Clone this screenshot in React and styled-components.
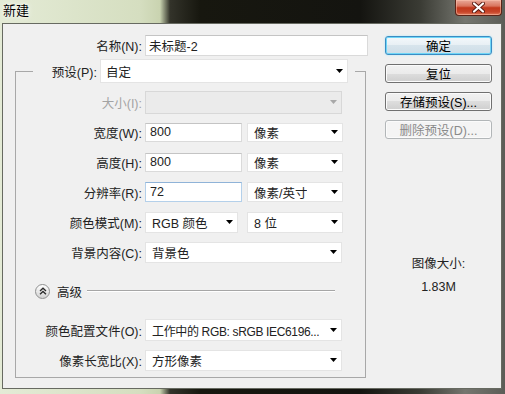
import styled, { createGlobalStyle } from "styled-components";

const GlobalStyle = createGlobalStyle`
  html, body {
    margin: 0;
    padding: 0;
    background: #1b1b16;
  }
  body {
    width: 505px;
    height: 394px;
    overflow: hidden;
  }
  * {
    box-sizing: border-box;
  }
`;

const Window = styled.div`
  width: 505px;
  height: 394px;
  display: flex;
  flex-direction: column;
  padding: 0 3px 5px 2px;
  background: linear-gradient(90deg, #e4ebd6 0px, #d5dec0 140px, #c9d3b0 160px, #33332a 170px, #17170f 200px, #141410 360px, #3a3b34 420px, #75766f 465px, #5c5d57 505px);
  font-family: "Liberation Sans", "Noto Sans CJK SC", sans-serif;
  font-size: 12.5px;
  color: #222;
`;

const TitleBar = styled.div`
  height: 23px;
  display: flex;
  justify-content: space-between;
  align-items: flex-start;
`;

const Title = styled.div`
  padding: 3px 0 0 1px;
  font-size: 13px;
  line-height: 15px;
  color: #000;
  text-shadow: 0 0 6px #fff, 0 0 3px #fff;
`;

const CloseButton = styled.div`
  width: 47px;
  height: 16px;
  border: 1px solid #5b2418;
  border-top: none;
  border-radius: 0 0 4px 4px;
  background: linear-gradient(#e9a99a, #d9755f 40%, #c2381c 52%, #c8452a 80%, #e07a5b);
  box-shadow: inset 0 0 0 1px rgba(255, 200, 180, 0.5);
  display: flex;
  align-items: center;
  justify-content: center;
`;

const Client = styled.div`
  flex: 1;
  display: flex;
  justify-content: space-between;
  border: 1px solid #676a61;
  background: #f0f0f0;
`;

const Main = styled.div`
  width: 367px;
  display: flex;
  flex-direction: column;
  padding-top: 11px;
`;

const NameRow = styled.div`
  display: flex;
  align-items: center;
  height: 21px;
`;

const Label = styled.span`
  width: ${(p) => p.$w || 126}px;
  margin-right: 3px;
  text-align: right;
  white-space: nowrap;
  color: ${(p) => (p.$disabled ? "#a3a3a3" : "#222")};
`;

const Group = styled.fieldset`
  margin: 3px 0 0 12px;
  width: 351px;
  min-width: 0;
  border: 1px solid #a8a8a8;
  padding: 4px 0 2px 0;
`;

const Legend = styled.legend`
  margin-left: 17px;
  padding: 0 7px 0 0;
`;

const LegendInner = styled.div`
  display: flex;
  align-items: center;
`;

const Row = styled.div`
  display: flex;
  align-items: center;
  height: 30px;
  margin-top: ${(p) => p.$mt || 0}px;
`;

const TextBox = styled.div`
  width: ${(p) => p.$w}px;
  height: ${(p) => p.$h || 19}px;
  display: flex;
  align-items: center;
  padding-left: ${(p) => p.$pl || 4}px;
  background: #fff;
  border: 1px solid ${(p) => (p.$focus ? "#b4d0ea" : "#dadada")};
  border-top-color: ${(p) => (p.$focus ? "#8fb3d8" : "#c4c4c4")};
  white-space: nowrap;
`;

const Select = styled.div`
  width: ${(p) => p.$w}px;
  height: ${(p) => p.$h || 21}px;
  margin-left: ${(p) => p.$ml || 0}px;
  display: flex;
  align-items: center;
  justify-content: space-between;
  gap: 4px;
  padding: 0 4px 0 ${(p) => p.$pl || 6}px;
  background: ${(p) => (p.$disabled ? "#ebebeb" : "#fff")};
  border: 1px solid ${(p) => (p.$disabled ? "#d8d8d8" : "#e4e4e4")};
  white-space: nowrap;
  overflow: hidden;
`;

const SelectText = styled.span`
  font-size: ${(p) => p.$fs || 12.5}px;
  letter-spacing: ${(p) => p.$ls || 0}px;
  overflow: hidden;
`;

const Arrow = ({ color = "#000" }) => (
  <svg width="7" height="4" viewBox="0 0 7 4" style={{ flexShrink: 0 }}>
    <polygon points="0,0 7,0 3.5,4" fill={color} />
  </svg>
);

const AdvancedRow = styled.div`
  display: flex;
  align-items: center;
  height: 30px;
  margin-top: 9px;
  padding-left: 19px;
`;

const Toggle = styled.div`
  width: 15px;
  height: 15px;
  border-radius: 50%;
  border: 1px solid #8f9090;
  background: linear-gradient(#ffffff, #e6e6e6 55%, #d2d2d2);
  display: flex;
  align-items: center;
  justify-content: center;
`;

const AdvancedText = styled.span`
  margin-left: 7px;
`;

const Rule = styled.div`
  margin-left: 5px;
  width: 248px;
  height: 2px;
  border-top: 1px solid #a6a6a6;
  border-bottom: 1px solid #fff;
`;

const Side = styled.div`
  width: 107px;
  margin-right: 9px;
  padding-top: 12px;
  display: flex;
  flex-direction: column;
  gap: 9px;
`;

const Button = styled.div`
  height: 19px;
  display: flex;
  align-items: center;
  justify-content: center;
  border-radius: 3px;
  white-space: nowrap;
  border: 1px solid ${(p) => (p.$default ? "#3a8cc4" : p.$disabled ? "#b2b6b8" : "#707070")};
  color: ${(p) => (p.$disabled ? "#8a8a8a" : "#000")};
  background: ${(p) =>
    p.$disabled
      ? "#f4f4f4"
      : p.$default
      ? "linear-gradient(#f3f8fb, #e7eff4 50%, #d7e4ec 50%, #cddde7)"
      : "linear-gradient(#f2f2f2, #ebebeb 50%, #dddddd 50%, #cfcfcf)"};
  box-shadow: ${(p) =>
    p.$default
      ? "inset 0 0 0 1px #6fd6f7, 0 0 2px #9fe6fb"
      : "inset 0 0 0 1px #fbfbfb"};
`;

const SizeInfo = styled.div`
  margin-top: 108px;
  text-align: center;
  line-height: 16px;
`;

const SizeValue = styled.div`
  margin-top: 7px;
`;

export default function App() {
  return (
    <>
      <GlobalStyle />
      <Window>
        <TitleBar>
          <Title>新建</Title>
          <CloseButton>
            <svg width="13" height="11" viewBox="0 0 13 11">
              <path d="M2 1.5 L11 9.5 M11 1.5 L2 9.5" stroke="#5a1a10" strokeWidth="4" strokeLinecap="round" />
              <path d="M2 1.5 L11 9.5 M11 1.5 L2 9.5" stroke="#fff" strokeWidth="2.2" strokeLinecap="round" />
            </svg>
          </CloseButton>
        </TitleBar>
        <Client>
          <Main>
            <NameRow>
              <Label $w={139}>名称(N):</Label>
              <TextBox $w={223} $h={21} $pl={3}>未标题-2</TextBox>
            </NameRow>
            <Group>
              <Legend>
                <LegendInner>
                  <Label $w={64}>预设(P):</Label>
                  <Select $w={248} $h={24} $pl={5}>
                    <SelectText>自定</SelectText>
                    <Arrow />
                  </Select>
                </LegendInner>
              </Legend>
              <Row>
                <Label $disabled>大小(I):</Label>
                <Select $w={197} $h={23} $disabled>
                  <span />
                  <Arrow color="#a8a8a8" />
                </Select>
              </Row>
              <Row>
                <Label>宽度(W):</Label>
                <TextBox $w={97}>800</TextBox>
                <Select $w={96} $h={19} $ml={5}>
                  <SelectText>像素</SelectText>
                  <Arrow />
                </Select>
              </Row>
              <Row>
                <Label>高度(H):</Label>
                <TextBox $w={97}>800</TextBox>
                <Select $w={96} $h={19} $ml={5}>
                  <SelectText>像素</SelectText>
                  <Arrow />
                </Select>
              </Row>
              <Row>
                <Label>分辨率(R):</Label>
                <TextBox $w={97} $h={20} $focus>72</TextBox>
                <Select $w={96} $h={20} $ml={5}>
                  <SelectText>像素/英寸</SelectText>
                  <Arrow />
                </Select>
              </Row>
              <Row>
                <Label>颜色模式(M):</Label>
                <Select $w={93}>
                  <SelectText>RGB 颜色</SelectText>
                  <Arrow />
                </Select>
                <Select $w={96} $ml={9}>
                  <SelectText>8 位</SelectText>
                  <Arrow />
                </Select>
              </Row>
              <Row>
                <Label>背景内容(C):</Label>
                <Select $w={197}>
                  <SelectText>背景色</SelectText>
                  <Arrow />
                </Select>
              </Row>
              <AdvancedRow>
                <Toggle>
                  <svg width="8" height="8" viewBox="0 0 8 8">
                    <polyline points="1,4 4,1.2 7,4" fill="none" stroke="#2a2a2a" strokeWidth="1.3" />
                    <polyline points="1,7.2 4,4.4 7,7.2" fill="none" stroke="#2a2a2a" strokeWidth="1.3" />
                  </svg>
                </Toggle>
                <AdvancedText>高级</AdvancedText>
                <Rule />
              </AdvancedRow>
              <Row $mt={9}>
                <Label>颜色配置文件(O):</Label>
                <Select $w={197} $h={22}>
                  <SelectText $fs={12} $ls={-0.35}>工作中的 RGB: sRGB IEC6196...</SelectText>
                  <Arrow />
                </Select>
              </Row>
              <Row>
                <Label>像素长宽比(X):</Label>
                <Select $w={197}>
                  <SelectText>方形像素</SelectText>
                  <Arrow />
                </Select>
              </Row>
            </Group>
          </Main>
          <Side>
            <Button $default>确定</Button>
            <Button>复位</Button>
            <Button>存储预设(S)...</Button>
            <Button $disabled>删除预设(D)...</Button>
            <SizeInfo>
              <div>图像大小:</div>
              <SizeValue>1.83M</SizeValue>
            </SizeInfo>
          </Side>
        </Client>
      </Window>
    </>
  );
}
